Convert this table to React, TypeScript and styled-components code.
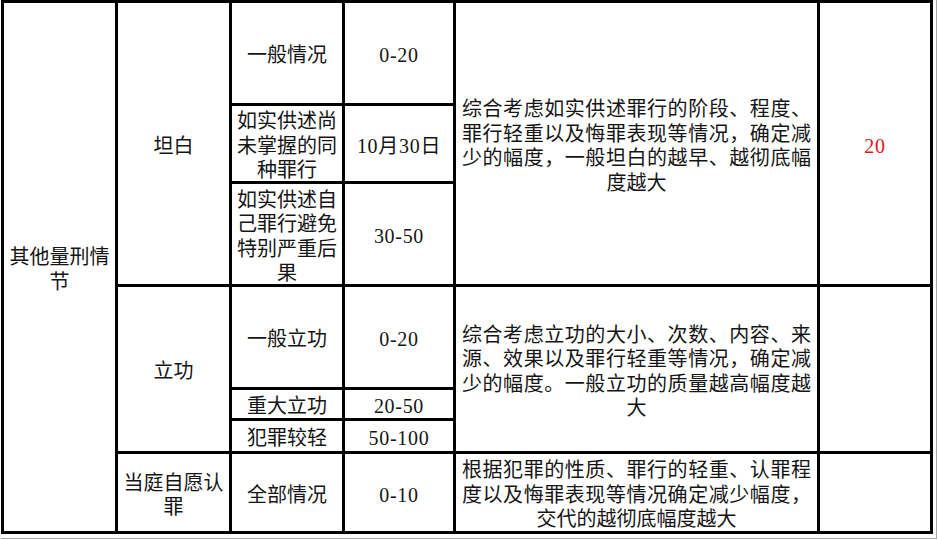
import styled, { createGlobalStyle } from "styled-components";

const GlobalStyle = createGlobalStyle`
  body {
    margin: 0;
    background: #fff;
  }
`;

const Frame = styled.div`
  display: inline-block;
  margin-left: 1px;
  padding: 0 3px 4px 0;
  border-right: 1px solid #a8a8a8;
  border-bottom: 1px solid #a8a8a8;
`;

const Sheet = styled.div`
  display: grid;
  grid-template-columns: 111px 111px 110px 108px 361px 110px;
  grid-template-rows: 100px 75px 100px 100px 28px 30px 77px;
  gap: 3px;
  padding: 3px;
  background: #000;
  font-family: "Liberation Serif", "Noto Sans CJK SC", serif;
  font-size: 20px;
  line-height: 24.5px;
  color: #151515;
`;

const Cell = styled.div<{ $rows?: number; $red?: boolean }>`
  grid-row: span ${(p) => p.$rows ?? 1};
  display: flex;
  align-items: center;
  justify-content: center;
  padding-top: 5px;
  text-align: center;
  background: #fff;
  color: ${(p) => (p.$red ? "#e4141c" : "inherit")};
  overflow: hidden;
`;

const NumCell = styled(Cell)`
  letter-spacing: 0.7px;
`;

const DescCell = styled(Cell)`
  padding: 5px 6px 0;
`;

const Desc = styled.span`
  display: block;
  width: 100%;
  text-align: justify;
  text-align-last: center;
  text-spacing-trim: space-all;
`;

const App = () => {
  return (
    <>
      <GlobalStyle />
      <Frame>
        <Sheet>
          <Cell $rows={7}>其他量刑情节</Cell>
          <Cell $rows={3}>坦白</Cell>
          <Cell>一般情况</Cell>
          <NumCell>0-20</NumCell>
          <DescCell $rows={3}>
            <Desc>
              综合考虑如实供述罪行的阶段、程度、罪行轻重以及悔罪表现等情况，确定减少的幅度，一般坦白的越早、越彻底幅度越大
            </Desc>
          </DescCell>
          <NumCell $rows={3} $red>
            20
          </NumCell>

          <Cell>如实供述尚未掌握的同种罪行</Cell>
          <NumCell>10月30日</NumCell>
          <Cell>如实供述自己罪行避免特别严重后果</Cell>
          <NumCell>30-50</NumCell>

          <Cell $rows={3}>立功</Cell>
          <Cell>一般立功</Cell>
          <NumCell>0-20</NumCell>
          <DescCell $rows={3}>
            <Desc>
              综合考虑立功的大小、次数、内容、来源、效果以及罪行轻重等情况，确定减少的幅度。一般立功的质量越高幅度越大
            </Desc>
          </DescCell>
          <Cell $rows={3} />
          <Cell>重大立功</Cell>
          <NumCell>20-50</NumCell>
          <Cell>犯罪较轻</Cell>
          <NumCell>50-100</NumCell>

          <Cell>当庭自愿认罪</Cell>
          <Cell>全部情况</Cell>
          <NumCell>0-10</NumCell>
          <DescCell>
            <Desc>
              根据犯罪的性质、罪行的轻重、认罪程度以及悔罪表现等情况确定减少幅度，交代的越彻底幅度越大
            </Desc>
          </DescCell>
          <Cell />
        </Sheet>
      </Frame>
    </>
  );
};

export default App;
